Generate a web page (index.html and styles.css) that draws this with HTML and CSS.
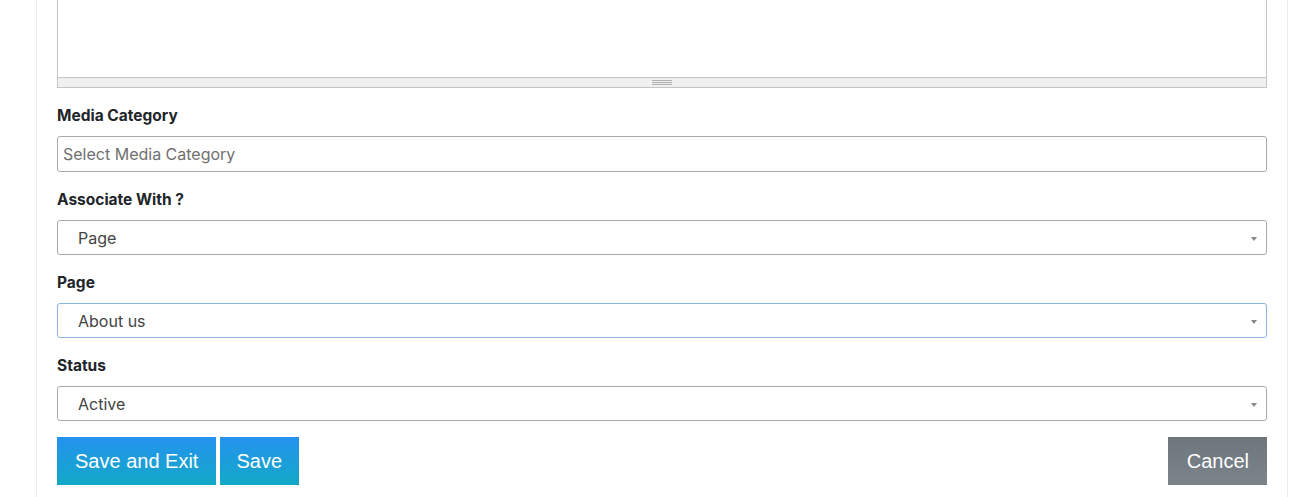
FILE: index.html
```html
<!DOCTYPE html>
<html>
<head>
<meta charset="utf-8">
<link rel="stylesheet" href="styles.css">
</head>
<body>
<div class="card">
  <div class="editor">
    <div class="editor-area"></div>
    <div class="resize-bar"><span class="grip"></span></div>
  </div>

  <div class="group">
    <label class="label">Media Category</label>
    <div class="input placeholder">Select Media Category</div>
  </div>

  <div class="group">
    <label class="label">Associate With ?</label>
    <div class="select"><span>Page</span><span class="caret"></span></div>
  </div>

  <div class="group">
    <label class="label">Page</label>
    <div class="select focused"><span>About us</span><span class="caret"></span></div>
  </div>

  <div class="group">
    <label class="label">Status</label>
    <div class="select"><span>Active</span><span class="caret"></span></div>
  </div>

  <div class="actions">
    <div class="left">
      <button class="btn btn-primary">Save and Exit</button>
      <button class="btn btn-primary btn-save">Save</button>
    </div>
    <button class="btn btn-cancel">Cancel</button>
  </div>
</div>
</body>
</html>
```

FILE: styles.css
```css
html, body {
  margin: 0;
  padding: 0;
  background: #ffffff;
}

body {
  font-family: "Inter", "Roboto", "Liberation Sans", sans-serif;
  color: #212529;
}

.card {
  margin-left: 36px;
  width: 1210px;
  padding: 0 20px 20px;
  border-left: 1px solid #ececec;
  border-right: 1px solid #ececec;
  height: 497px;
}

.editor {
  border: 1px solid #c4c4c4;
  border-top: none;
}

.editor-area {
  height: 77px;
  background: #fff;
}

.resize-bar {
  height: 9px;
  background: #f0f0f0;
  border-top: 1px solid #c4c4c4;
  display: flex;
  justify-content: center;
  align-items: center;
}

.grip {
  display: block;
  width: 20px;
  height: 5px;
  border-top: 1px solid #b0b0b0;
  border-bottom: 1px solid #b0b0b0;
  box-sizing: border-box;
  position: relative;
}

.grip::after {
  content: "";
  position: absolute;
  left: 0;
  right: 0;
  top: 1px;
  border-top: 1px solid #b0b0b0;
}

.group {
  margin-top: 16px;
}

.label {
  display: block;
  font-size: 15.5px;
  font-weight: 700;
  line-height: 22px;
  padding-top: 1px;
  margin-bottom: 9px;
  color: #212529;
}

.input {
  box-sizing: border-box;
  height: 36px;
  border: 1px solid #a9a9a9;
  border-radius: 3px;
  padding: 0 5px;
  display: flex;
  align-items: center;
  font-size: 16px;
}

.placeholder {
  color: #6f6f6f;
}

.select {
  box-sizing: border-box;
  height: 35px;
  border: 1px solid #a9a9a9;
  border-radius: 3px;
  padding: 0 9px 0 20px;
  display: flex;
  align-items: center;
  justify-content: space-between;
  font-size: 16px;
  color: #444;
}

.select.focused {
  border-color: #8ab4e0;
}

.caret {
  width: 0;
  height: 0;
  border-left: 3px solid transparent;
  border-right: 3px solid transparent;
  border-top: 4px solid #888;
  margin-top: 2px;
}

.actions {
  margin-top: 16px;
  display: flex;
  justify-content: space-between;
}

.left {
  display: flex;
  gap: 4px;
}

.btn {
  height: 48px;
  border: none;
  border-radius: 0;
  padding: 0 18px;
  font-family: "Liberation Sans", Arial, sans-serif;
  font-size: 20px;
  color: #fff;
  cursor: pointer;
}

.btn-primary {
  background: linear-gradient(to bottom, #2493ef, #13a8c6);
}

.btn-save {
  padding: 0 17px 0 16px;
}

.btn-cancel {
  padding: 0 18px 0 19px;
  background: linear-gradient(to bottom, #6d757d, #7b838b);
}
```
